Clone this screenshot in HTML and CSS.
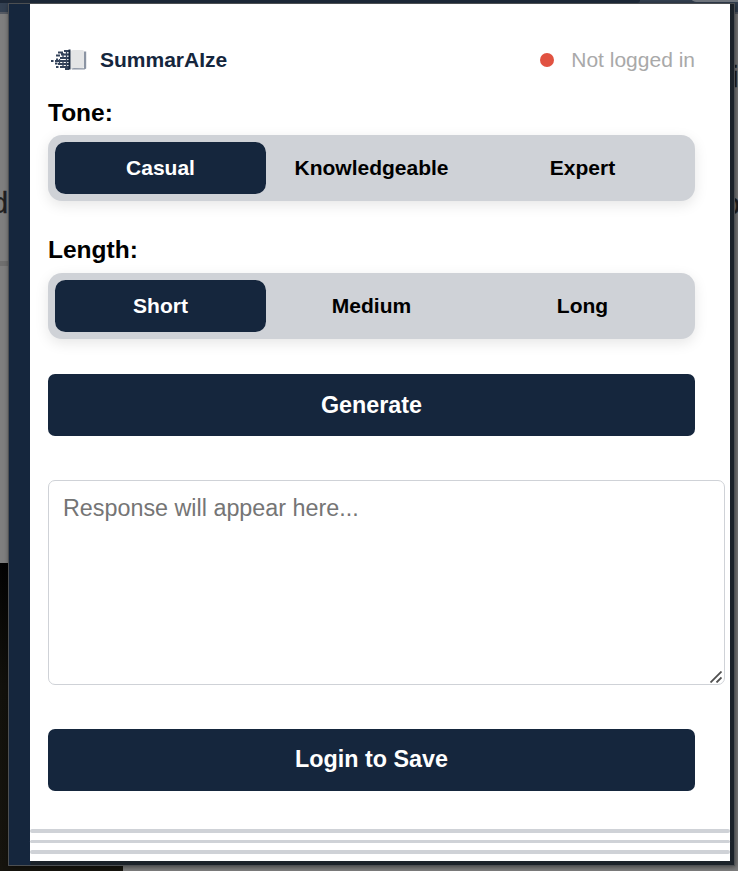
FILE: index.html
```html
<!DOCTYPE html>
<html lang="en">
<head>
<meta charset="utf-8">
<title>SummarAIze</title>
<link rel="stylesheet" href="styles.css">
</head>
<body>
<div class="backdrop">
  <div class="tabstrip"></div>
  <div class="tabpill"></div>
  <div class="toolbar"></div>
  <div class="divider"></div>
  <div class="photo"></div>
  <span class="page-text text-left">d</span>
  <span class="page-text text-right">i</span>
  <span class="page-text text-right-low">o</span>
</div>
<div class="popup">
  <main class="panel">
    <header class="header">
      <div class="brand">
        <svg class="logo" width="38" height="24" viewBox="0 0 38 24">
          <path d="M20 20L33 20.3V3.500H35.200V20.500L33.500 21.500H21z" fill="#8b94a3"/>
          <path d="M19.500 3L22 2H31.500Q33 2 33 3.500V18.500Q33 20 31.500 20H23L19.500 21z" fill="#e4e5e6"/>
          <path d="M7 4.500H12M13 3H18M5 7.500H9M10 6.500H18M9 10H18M4 13H18M7 16H18M5 19H7.500M9 19H18M14 21H18" stroke="#34435b" stroke-width="2"/>
          <path d="M0 12h2.500v2H0zM4 14.500h2.500v2H4zM5 10.500h2v2H5z" fill="#34435b"/>
          <path d="M8.500 11V17M12 5V10M15.500 3V20M12 13V19" stroke="#34435b" stroke-width="1.300"/>
          <path d="M18.500 1.500V21.500" stroke="#16273e" stroke-width="2"/>
        </svg>
        <span class="brand-name">SummarAIze</span>
      </div>
      <div class="status"><span class="dot"></span>Not logged in</div>
    </header>
    <h2 class="label">Tone:</h2>
    <div class="segments">
      <button class="segment active">Casual</button>
      <button class="segment">Knowledgeable</button>
      <button class="segment">Expert</button>
    </div>
    <h2 class="label label-length">Length:</h2>
    <div class="segments">
      <button class="segment active">Short</button>
      <button class="segment">Medium</button>
      <button class="segment">Long</button>
    </div>
    <button class="action generate">Generate</button>
    <div class="response">
      <textarea class="response-box" placeholder="Response will appear here..."></textarea>
      <svg class="grip" width="12" height="12" viewBox="0 0 12 12"><path d="M.5 11.500L11.500 .5M6.500 11.500L11.500 6.500" stroke="#505050" stroke-width="1.800"/></svg>
    </div>
    <button class="action login">Login to Save</button>
    <div class="pages"><i></i><i></i><i></i></div>
  </main>
</div>
</body>
</html>
```
FILE: styles.css
```css
* { box-sizing: border-box; }
body {
  margin: 0;
  height: 871px;
  overflow: hidden;
  font-family: "Liberation Sans", Arial, sans-serif;
  font-size: 21px;
}
button, textarea { font-family: inherit; margin: 0; }

.backdrop {
  position: absolute;
  inset: 0;
  overflow: hidden;
  background: #7f7f7f;
}
.tabstrip, .tabpill, .toolbar, .divider, .photo, .page-text { position: absolute; }
.tabstrip { top: 0; left: 0; width: 640px; height: 3px; background: #1c2736; border-radius: 0 0 4px 0; z-index: 1; }
.tabpill { top: -8px; left: 691px; width: 60px; height: 10px; background: #6e747c; border-radius: 6px; z-index: 1; }
.toolbar { top: 0; left: 0; width: 738px; height: 14px; background: #344152; border-bottom: 2px solid #555a63; }
.divider { top: 261px; left: 0; width: 8px; height: 5px; background: #6f6f6f; }
.photo { top: 563px; left: 0; width: 123px; height: 308px; background: linear-gradient(#030303, #12110c 40%, #16140e); }
.page-text { color: #202020; font-size: 29px; line-height: 32px; -webkit-text-stroke: .4px #202020; }
.text-left { top: 187px; left: -8px; }
.text-right { top: 61px; left: 732px; }
.text-right-low { top: 188px; left: 724px; }

.popup {
  position: relative;
  width: 727px;
  height: 863px;
  margin: 0 0 0 8px;
  top: 3px;
  padding-left: 21px;
  background: linear-gradient(90deg, #15263d 21px, #1b2229 22px);
  border: 1px solid #4c4f52;
  box-shadow: 1px 1px 5px rgba(0, 0, 0, .5);
}
.panel {
  width: 700px;
  height: 857px;
  padding: 39px 35px 0 18px;
  background: #fff;
  display: flex;
  flex-direction: column;
}
.header { display: flex; justify-content: space-between; align-items: center; height: 34px; flex: none; }
.brand { display: flex; align-items: center; gap: 11px; padding-left: 3px; }
.logo { display: block; }
.brand-name { color: #15263d; font-weight: bold; }
.status { display: flex; align-items: center; gap: 17px; color: #a9a9a9; }
.dot { width: 14px; height: 14px; border-radius: 50%; background: #e15241; }
.label { margin: 22px 0 8px; font-size: 24.5px; line-height: 28px; font-weight: bold; }
.label-length { margin-top: 35px; margin-bottom: 9px; }
.segments {
  flex: none;
  display: flex;
  height: 66px;
  padding: 7px;
  border-radius: 14px;
  background: #cfd2d7;
  box-shadow: 0 4px 14px rgba(0, 0, 0, .1);
}
.segment {
  flex: 1 1 0;
  padding: 0;
  border: 0;
  border-radius: 10.500px;
  background: transparent;
  color: #000;
  font-size: 21px;
  font-weight: bold;
}
.segment.active { background: #15263d; color: #fff; }
.action {
  flex: none;
  height: 62px;
  border: 0;
  border-radius: 7px;
  background: #15263d;
  color: #fff;
  font-size: 23.330px;
  font-weight: bold;
}
.generate { margin-top: 35px; }
.login { padding-bottom: 3px; }
.response { position: relative; flex: none; width: 677px; height: 205px; margin: 44px 0; }
.response-box {
  display: block;
  width: 100%;
  height: 100%;
  padding: 14px 14px 12px;
  border: 1px solid #cfd2d7;
  border-radius: 7px;
  resize: none;
  font-size: 23.330px;
  line-height: 27px;
}
.response-box::placeholder { color: #757575; }
.grip { position: absolute; right: 3px; bottom: 2px; }
.pages { display: flex; flex-direction: column; gap: 7px; margin: 38px -35px 0 -18px; }
.pages i { height: 4px; border-radius: 2px; background: #cfd2d7; }
.pages i:nth-child(2) { height: 3px; }
```
